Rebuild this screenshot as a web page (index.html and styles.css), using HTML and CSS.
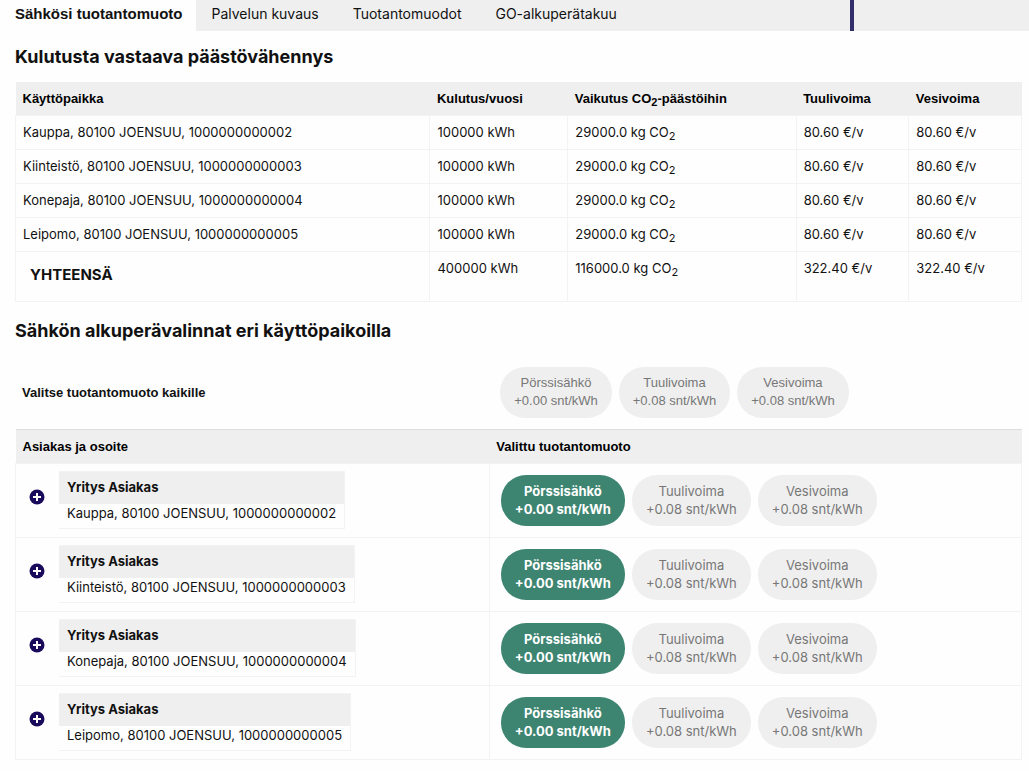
FILE: index.html
```html
<!DOCTYPE html>
<html lang="fi">
<head>
<meta charset="utf-8">
<meta name="viewport" content="width=device-width, initial-scale=1">
<title>Sähkösi tuotantomuoto</title>
<link rel="stylesheet" href="styles.css">
</head>
<body>
<nav class="tabs">
  <div class="tab-list">
    <a class="tab tab-active" href="#tuotantomuoto">Sähkösi tuotantomuoto</a>
    <a class="tab" href="#kuvaus">Palvelun kuvaus</a>
    <a class="tab" href="#tuotantomuodot">Tuotantomuodot</a>
    <a class="tab" href="#takuu">GO-alkuperätakuu</a>
  </div>
</nav>
<main class="content">
  <h2 class="heading">Kulutusta vastaava päästövähennys</h2>
  <table class="grid usage">
    <colgroup><col class="col-place"><col class="col-usage"><col class="col-effect"><col class="col-price"><col class="col-price"></colgroup>
    <thead>
      <tr><th scope="col">Käyttöpaikka</th><th scope="col">Kulutus/vuosi</th><th scope="col">Vaikutus CO<sub>2</sub>-päästöihin</th><th scope="col">Tuulivoima</th><th scope="col">Vesivoima</th></tr>
    </thead>
    <tbody>
      <tr><td>Kauppa, 80100 JOENSUU, 1000000000002</td><td>100000 kWh</td><td>29000.0 kg CO<sub>2</sub></td><td>80.60 €/v</td><td>80.60 €/v</td></tr>
      <tr><td>Kiinteistö, 80100 JOENSUU, 1000000000003</td><td>100000 kWh</td><td>29000.0 kg CO<sub>2</sub></td><td>80.60 €/v</td><td>80.60 €/v</td></tr>
      <tr><td>Konepaja, 80100 JOENSUU, 1000000000004</td><td>100000 kWh</td><td>29000.0 kg CO<sub>2</sub></td><td>80.60 €/v</td><td>80.60 €/v</td></tr>
      <tr><td>Leipomo, 80100 JOENSUU, 1000000000005</td><td>100000 kWh</td><td>29000.0 kg CO<sub>2</sub></td><td>80.60 €/v</td><td>80.60 €/v</td></tr>
      <tr class="total"><td><h3 class="total-label">YHTEENSÄ</h3></td><td>400000 kWh</td><td>116000.0 kg CO<sub>2</sub></td><td>322.40 €/v</td><td>322.40 €/v</td></tr>
    </tbody>
  </table>

  <h2 class="heading heading-choices">Sähkön alkuperävalinnat eri käyttöpaikoilla</h2>
  <div class="choose-all">
    <strong class="choose-label">Valitse tuotantomuoto kaikille</strong>
    <div class="choices">
      <button class="choice choice-all" type="button">Pörssisähkö<br>+0.00 snt/kWh</button>
      <button class="choice choice-all" type="button">Tuulivoima<br>+0.08 snt/kWh</button>
      <button class="choice choice-all" type="button">Vesivoima<br>+0.08 snt/kWh</button>
    </div>
  </div>
  <table class="grid origins">
    <colgroup><col class="col-customer"><col></colgroup>
    <thead>
      <tr><th scope="col">Asiakas ja osoite</th><th scope="col">Valittu tuotantomuoto</th></tr>
    </thead>
    <tbody>
      <tr>
        <td><div class="customer">
          <button class="expand" type="button" aria-label="Avaa"><svg class="plus" viewBox="0 0 16 16"><circle cx="8" cy="8" r="7.5"/><path d="M8 4v8M4 8h8"/></svg></button>
          <div class="card"><div class="card-name">Yritys Asiakas</div><div class="card-place">Kauppa, 80100 JOENSUU, 1000000000002</div></div>
        </div></td>
        <td><div class="choices">
          <button class="choice choice-on" type="button">Pörssisähkö<br>+0.00 snt/kWh</button>
          <button class="choice" type="button">Tuulivoima<br>+0.08 snt/kWh</button>
          <button class="choice" type="button">Vesivoima<br>+0.08 snt/kWh</button>
        </div></td>
      </tr>
      <tr>
        <td><div class="customer">
          <button class="expand" type="button" aria-label="Avaa"><svg class="plus" viewBox="0 0 16 16"><circle cx="8" cy="8" r="7.5"/><path d="M8 4v8M4 8h8"/></svg></button>
          <div class="card"><div class="card-name">Yritys Asiakas</div><div class="card-place">Kiinteistö, 80100 JOENSUU, 1000000000003</div></div>
        </div></td>
        <td><div class="choices">
          <button class="choice choice-on" type="button">Pörssisähkö<br>+0.00 snt/kWh</button>
          <button class="choice" type="button">Tuulivoima<br>+0.08 snt/kWh</button>
          <button class="choice" type="button">Vesivoima<br>+0.08 snt/kWh</button>
        </div></td>
      </tr>
      <tr>
        <td><div class="customer">
          <button class="expand" type="button" aria-label="Avaa"><svg class="plus" viewBox="0 0 16 16"><circle cx="8" cy="8" r="7.5"/><path d="M8 4v8M4 8h8"/></svg></button>
          <div class="card"><div class="card-name">Yritys Asiakas</div><div class="card-place">Konepaja, 80100 JOENSUU, 1000000000004</div></div>
        </div></td>
        <td><div class="choices">
          <button class="choice choice-on" type="button">Pörssisähkö<br>+0.00 snt/kWh</button>
          <button class="choice" type="button">Tuulivoima<br>+0.08 snt/kWh</button>
          <button class="choice" type="button">Vesivoima<br>+0.08 snt/kWh</button>
        </div></td>
      </tr>
      <tr>
        <td><div class="customer">
          <button class="expand" type="button" aria-label="Avaa"><svg class="plus" viewBox="0 0 16 16"><circle cx="8" cy="8" r="7.5"/><path d="M8 4v8M4 8h8"/></svg></button>
          <div class="card"><div class="card-name">Yritys Asiakas</div><div class="card-place">Leipomo, 80100 JOENSUU, 1000000000005</div></div>
        </div></td>
        <td><div class="choices">
          <button class="choice choice-on" type="button">Pörssisähkö<br>+0.00 snt/kWh</button>
          <button class="choice" type="button">Tuulivoima<br>+0.08 snt/kWh</button>
          <button class="choice" type="button">Vesivoima<br>+0.08 snt/kWh</button>
        </div></td>
      </tr>
    </tbody>
  </table>
</main>
</body>
</html>
```

FILE: styles.css
```css
* { box-sizing: border-box; }
body {
  margin: 0;
  background: #fefefe;
  color: #111;
  font-family: Inter, "Liberation Sans", Arial, sans-serif;
  font-size: 13px;
  line-height: 18px;
}
.tabs { background: #efefef; }
.tab-list {
  display: flex;
  width: 83%;
  height: 31px;
  border-right: 4px solid #312e6b;
}
.tab {
  padding: 4px 18px 7px 16px;
  line-height: 20px;
  font-size: 14px;
  color: #111;
  text-decoration: none;
  white-space: nowrap;
}
.tab-active {
  padding: 4px 13px 7px 15px;
  background: #fefefe;
  font-family: "Liberation Sans", Arial, sans-serif;
  font-size: 15px;
  font-weight: 700;
}
.content { padding: 0 7px 12px 15px; }
.heading { margin: 0; padding: 13px 0; font-size: 18px; line-height: 25px; }
.heading-choices { padding: 16px 0 13px; }

.grid { width: 100%; border-collapse: collapse; table-layout: fixed; }
.grid th, .grid td { padding: 7px; text-align: left; vertical-align: top; }
.grid th { padding: 8px 7px 7px; background: #efefef; font-family: "Liberation Sans", Arial, sans-serif; font-size: 13px; color: #000; }
.grid td { border: 1px solid #f3f3f3; }
.usage tbody td { height: 34px; }
.grid sub { font-size: 11px; line-height: 0; vertical-align: -3px; }
.col-place { width: 41.2%; }
.col-usage { width: 13.7%; }
.col-effect { width: 22.7%; }
.col-price { width: 11.2%; }
.total-label { margin: 0; padding: 7px 8px 10px 7px; font-size: 15px; }

.choose-all { display: grid; grid-template-columns: 47% 1fr; align-items: center; padding: 11px 0; }
.choose-label { padding-left: 7px; font-family: "Liberation Sans", Arial, sans-serif; font-size: 13px; }
.choices { display: flex; gap: 7px; padding-left: 12px; }
.choice {
  padding: 7px 14px 8px;
  border: 0;
  border-radius: 25px;
  background: #efefef;
  color: #777;
  font-family: inherit;
  font-size: 13px;
  line-height: 18px;
  white-space: nowrap;
}
.choice-all { font-family: "Liberation Sans", Arial, sans-serif; }
.choice-on { background: #3d8571; color: #fff; font-weight: 700; }

.origins { border-top: 1px solid #ddd; }
.origins .choices { padding: 4px; }
.col-customer { width: 47.1%; }
.customer { display: flex; align-items: center; gap: 14px; padding-left: 6px; }
.expand { display: flex; padding: 0 0 6px; border: 0; background: none; }
.plus { width: 16px; height: 16px; }
.plus circle { fill: #1a0a5c; }
.plus path { stroke: #fff; stroke-width: 2; fill: none; }
.card { border: 1px solid #f3f3f3; border-left: 0; }
.card-name { padding: 6px 8px 8px; background: #efefef; font-weight: 700; }
.card-place { padding: 0 8px 6px; }
```
